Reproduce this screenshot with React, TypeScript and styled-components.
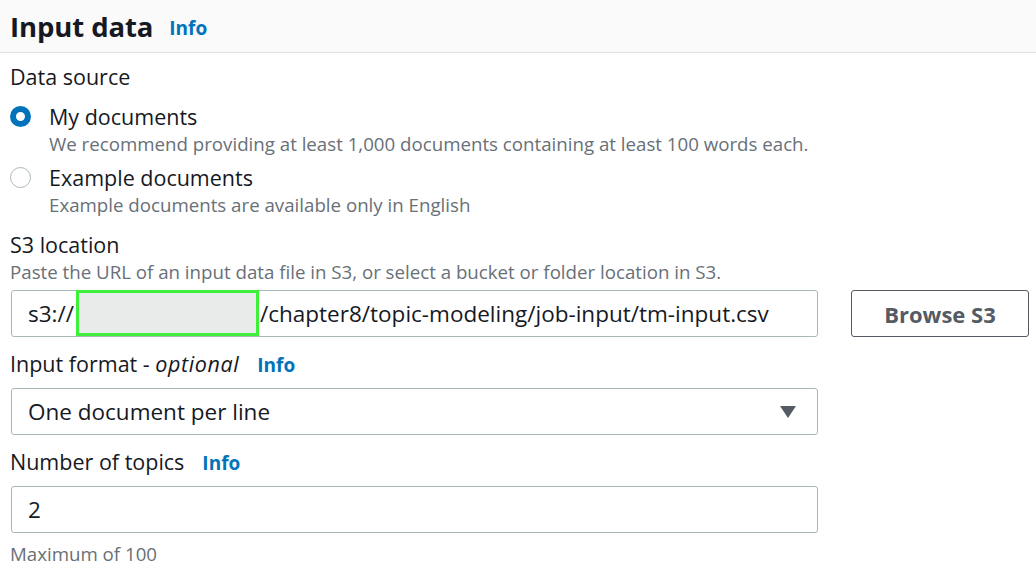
import React from "react";
import styled, { createGlobalStyle } from "styled-components";

const Global = createGlobalStyle`
  html, body { margin: 0; padding: 0; background: #ffffff; }
  body { font-family: "Open Sans", "Liberation Sans", sans-serif; color: #16191f; }
  * { box-sizing: border-box; }
`;

const Page = styled.div`
  width: 1036px;
  height: 572px;
  overflow: hidden;
  background: #fff;
`;

const Header = styled.div`
  height: 53px;
  background: #fafafa;
  border-bottom: 1px solid #e0e3e3;
  display: flex;
  align-items: center;
  gap: 16px;
  padding: 0 10px 0;
`;

const Title = styled.h2`
  margin: 0;
  font-size: 27.5px;
  font-weight: 700;
  color: #16191f;
  letter-spacing: -0.1px;
`;

const InfoLink = styled.a<{ $mt?: number }>`
  color: #0073bb;
  font-weight: 700;
  font-size: 19px;
  line-height: 27px;
  text-decoration: none;
  margin-top: ${(p) => p.$mt ?? 0}px;
`;

const Body = styled.div`
  padding: 10px 10px 0 10px;
  display: flex;
  flex-direction: column;
`;

const Label = styled.div<{ $mt?: number }>`
  font-size: 21.5px;
  line-height: 27px;
  height: 27px;
  margin-top: ${(p) => p.$mt ?? 0}px;
  color: #16191f;
  display: flex;
  align-items: baseline;
  gap: 18px;
  em { font-style: italic; letter-spacing: 0.6px; }
`;

const Description = styled.div<{ $mt?: number }>`
  font-size: 18.7px;
  line-height: 27px;
  margin-top: ${(p) => p.$mt ?? 0}px;
  color: #687078;
  white-space: nowrap;
`;

const RadioGroup = styled.div`
  display: flex;
  flex-direction: column;
  gap: 7px;
  margin-top: 13px;
`;

const RadioRow = styled.div`
  display: flex;
  align-items: flex-start;
  gap: 18px;
`;

const RadioCircle = styled.span<{ $checked?: boolean }>`
  width: 21px;
  height: 21px;
  border-radius: 50%;
  flex: none;
  margin-top: 3px;
  background: #fff;
  border: ${(p) => (p.$checked ? "6px solid #0073bb" : "1.5px solid #aab7b8")};
`;

const RadioText = styled.div`
  display: flex;
  flex-direction: column;
`;

const RadioLabel = styled.div`
  font-size: 21.5px;
  line-height: 27px;
  color: #16191f;
`;

const FieldRow = styled.div<{ $mt?: number }>`
  display: flex;
  gap: 33px;
  margin-top: ${(p) => p.$mt ?? 0}px;
`;

const InputBox = styled.div<{ $mt?: number }>`
  flex: none;
  width: 807px;
  height: 47px;
  margin-left: 1px;
  margin-top: ${(p) => p.$mt ?? 0}px;
  border: 1px solid #aab7b8;
  border-radius: 3px;
  display: flex;
  align-items: center;
  padding: 0 16px;
  font-size: 22.5px;
  color: #16191f;
  white-space: nowrap;
  background: #fff;
`;

const Redacted = styled.span`
  display: inline-block;
  flex: none;
  width: 183px;
  height: 46px;
  margin-top: -2px;
  border: 3px solid #3ff03a;
  background: #e9eaea;
  margin-left: 2px;
  margin-right: 1px;
`;

const BrowseButton = styled.button`
  flex: none;
  width: 178px;
  height: 47px;
  border: 1px solid #545b64;
  border-radius: 3px;
  background: #fff;
  color: #545b64;
  font-family: "Open Sans", "Liberation Sans", sans-serif;
  font-weight: 700;
  font-size: 22px;
  cursor: pointer;
`;

const Caret = styled.span`
  margin-left: auto;
  margin-right: 5px;
  width: 0;
  height: 0;
  border-left: 8px solid transparent;
  border-right: 8px solid transparent;
  border-top: 12px solid #545b64;
`;

export default function App() {
  return (
    <Page>
      <Global />
      <Header>
        <Title>Input data</Title>
        <InfoLink href="#" $mt={4}>Info</InfoLink>
      </Header>
      <Body>
        <Label>Data source</Label>
        <RadioGroup>
          <RadioRow>
            <RadioCircle $checked />
            <RadioText>
              <RadioLabel>My documents</RadioLabel>
              <Description>
                We recommend providing at least 1,000 documents containing at least 100 words each.
              </Description>
            </RadioText>
          </RadioRow>
          <RadioRow>
            <RadioCircle />
            <RadioText>
              <RadioLabel>Example documents</RadioLabel>
              <Description>Example documents are available only in English</Description>
            </RadioText>
          </RadioRow>
        </RadioGroup>

        <Label $mt={13}>S3 location</Label>
        <Description>
          Paste the URL of an input data file in S3, or select a bucket or folder location in S3.
        </Description>
        <FieldRow $mt={5}>
          <InputBox>
            s3://
            <Redacted />
            /chapter8/topic-modeling/job-input/tm-input.csv
          </InputBox>
          <BrowseButton>Browse S3</BrowseButton>
        </FieldRow>

        <Label $mt={13}>
          <span>
            Input format - <em>optional</em>
          </span>
          <InfoLink href="#">Info</InfoLink>
        </Label>
        <InputBox $mt={11}>
          One document per line
          <Caret />
        </InputBox>

        <Label $mt={13}>
          <span>Number of topics</span>
          <InfoLink href="#">Info</InfoLink>
        </Label>
        <InputBox $mt={11}>2</InputBox>
        <Description $mt={7}>Maximum of 100</Description>
      </Body>
    </Page>
  );
}
